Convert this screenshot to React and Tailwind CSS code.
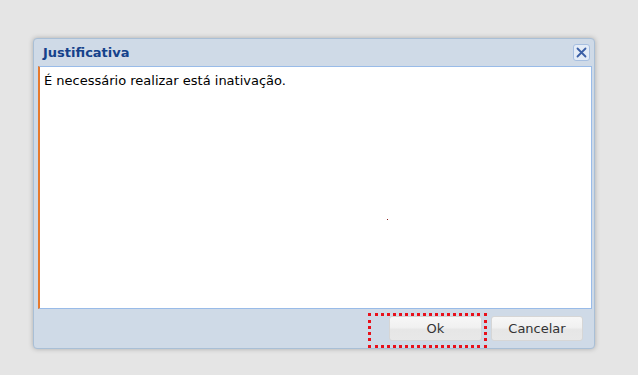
export default function App() {
  return (
    <div className="min-h-[375px] w-[638px] bg-[#e5e5e5] pt-[38px] pl-[33px]" style={{ fontFamily: '"DejaVu Sans", sans-serif' }}>
      <div className="flex h-[311px] w-[562px] flex-col rounded-[4px] border border-[#a9bfd6] bg-[#cfdae7] shadow-[0_0_5px_rgba(0,0,0,0.25)]">
        <div className="flex h-[28px] items-center justify-between pl-[9px] pr-[4px]">
          <span className="text-[13px] font-bold text-[#15428b]">Justificativa</span>
          <button className="flex h-[17px] w-[17px] items-center justify-center rounded-[3px] border border-[#a7bfe0] bg-[#e4ecf7]">
            <svg width="11" height="11" viewBox="0 0 11 11">
              <path d="M1.5 1.5 L9.5 9.5 M9.5 1.5 L1.5 9.5" stroke="#3b5fa6" strokeWidth="1.8" strokeLinecap="round" />
            </svg>
          </button>
        </div>
        <div className="pl-[4px] pr-[2px]">
          <div className="relative h-[243px] border border-[#99bbe8] border-l-2 border-l-[#e67a2e] bg-white px-[4px] pt-[5px] text-[13px] leading-[17px] text-black">
            É necessário realizar está inativação.
            <span className="absolute left-[347px] top-[152px] h-px w-px bg-[#8a1a1a]" />
          </div>
        </div>
        <div className="flex flex-1 items-start justify-end gap-[4px] pr-[11px] pt-[4px]">
          <div className="flex h-[35px] w-[119px] items-start justify-end border-[3px] border-dotted border-[#e8101a] pr-[2px]">
            <button className="h-[25px] w-[93px] rounded-[3px] border border-[#d6d6d6] bg-[linear-gradient(#f7f7f7_0%,#f1f1f1_45%,#e6e6e6_55%,#e8e8e8_100%)] text-[13px] text-[#333]">Ok</button>
          </div>
          <button className="mt-[3px] h-[25px] w-[92px] rounded-[3px] border border-[#d6d6d6] bg-[linear-gradient(#f7f7f7_0%,#f1f1f1_45%,#e6e6e6_55%,#e8e8e8_100%)] text-[13px] text-[#333]">Cancelar</button>
        </div>
      </div>
    </div>
  );
}
